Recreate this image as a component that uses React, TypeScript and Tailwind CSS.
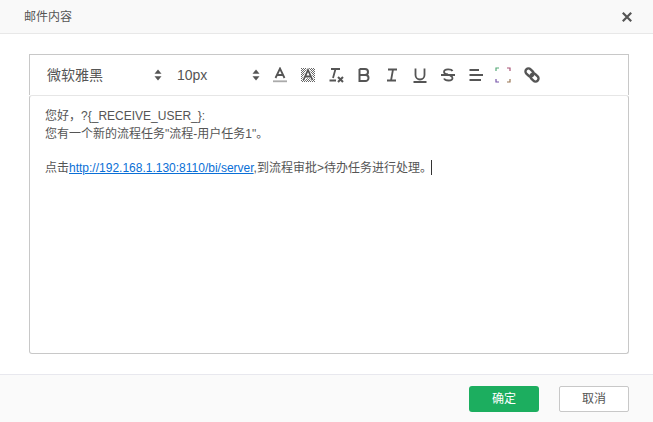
import React from 'react'

const cjk = "font-['Liberation_Sans','Noto_Sans_CJK_SC',sans-serif]"

const Updown = () => (
  <svg width="8" height="12" viewBox="0 0 8 12" className="fill-[#555]">
    <path d="M4 0.5 L7.5 4.8 H0.5 Z" />
    <path d="M4 11.5 L7.5 7.2 H0.5 Z" />
  </svg>
)

const stroke = { fill: 'none', stroke: '#555', strokeWidth: 1.8 }

const Toolbar = () => (
  <div className="flex items-center h-[41px] border border-b-0 border-[#c8c8c8] text-[#555]">
    <div className="w-[115px] ml-[17px] flex items-center justify-between text-[14px]">
      <span>微软雅黑</span>
      <Updown />
    </div>
    <div className="w-[83px] ml-[15px] flex items-center justify-between text-[14px]">
      <span>10px</span>
      <Updown />
    </div>
    <div className="flex items-center gap-3 ml-3">
      <svg width="16" height="16" viewBox="0 0 16 16">
        <path d="M3.5 11 L8 1.5 L12.5 11 M5.2 8 H10.8" {...stroke} />
        <rect x="1" y="13.4" width="14" height="1.8" fill="#aaa" />
      </svg>
      <svg width="16" height="16" viewBox="0 0 16 16">
        <defs>
          <pattern id="hatch" width="2" height="2" patternUnits="userSpaceOnUse">
            <rect width="1" height="1" fill="#666" />
            <rect x="1" y="1" width="1" height="1" fill="#666" />
          </pattern>
        </defs>
        <rect x="1" y="1" width="14" height="14" fill="url(#hatch)" />
        <path d="M3.5 13 L8 3 L12.5 13 M5.2 9.5 H10.8" fill="none" stroke="#fff" strokeWidth="3.4" />
        <path d="M3.5 13 L8 3 L12.5 13 M5.2 9.5 H10.8" {...stroke} />
      </svg>
      <svg width="16" height="16" viewBox="0 0 16 16">
        <path d="M3 2 H12 M7.5 2 L5 11 M1.5 13.5 H8" {...stroke} />
        <path d="M10 10 L15 15 M15 10 L10 15" {...stroke} strokeWidth={2} />
      </svg>
      <svg width="16" height="16" viewBox="0 0 16 16">
        <path d="M3.5 2 H9 A3 3 0 0 1 9 8 H3.5 M3.5 8 H9.5 A3 3 0 0 1 9.5 14 H3.5 Z M3.5 2 V14" {...stroke} strokeWidth={2} />
      </svg>
      <svg width="16" height="16" viewBox="0 0 16 16">
        <path d="M4 2.5 H13 M9 2.5 L7 13.5 M3 13.5 H12" {...stroke} />
      </svg>
      <svg width="16" height="16" viewBox="0 0 16 16">
        <path d="M3.5 1.5 V8 A4.5 4.5 0 0 0 12.5 8 V1.5 M1.5 15 H14.5" {...stroke} />
      </svg>
      <svg width="16" height="16" viewBox="0 0 16 16">
        <path d="M12.5 4 C11.5 2 4 1.5 4 5 C4 7 8 7.5 8 7.5 M4 11.5 C5 14 12.5 14.5 12.5 11 C12.5 9.5 11 9 10 8.5 M1 8 H15" {...stroke} />
      </svg>
      <svg width="16" height="16" viewBox="0 0 16 16">
        <path d="M1.5 3 H11 M1.5 8 H15 M1.5 13 H13" {...stroke} strokeWidth={1.9} />
      </svg>
      <svg width="16" height="16" viewBox="0 0 16 16" className="ml-[-1px]" fill="none" strokeWidth="1.2">
        <path d="M1 4 V1 H4" stroke="#5a7" />
        <path d="M12 1 H15 V4" stroke="#a57" />
        <path d="M1 12 V15 H4" stroke="#75a" />
        <path d="M15 12 V15 H12" stroke="#975" />
      </svg>
      <svg width="16" height="16" viewBox="0 0 16 16" className="ml-[1px]">
        <g transform="rotate(45 8 8)" fill="none" stroke="#555" strokeWidth="2.4">
          <rect x="0" y="5" width="9" height="6" rx="3" />
          <rect x="7" y="5" width="9" height="6" rx="3" />
        </g>
      </svg>
    </div>
  </div>
)

export default function App() {
  return (
    <div className={`w-[653px] h-[422px] flex flex-col bg-white overflow-hidden ${cjk}`}>
      <div className="h-[34px] shrink-0 flex items-center justify-between pl-6 pr-[21px] bg-[#f9f9f9] border-b border-[#e8e8e8]">
        <span className="text-[12px] text-[#555]">邮件内容</span>
        <svg width="10" height="10" viewBox="0 0 10 10">
          <path d="M0.8 0.8 L9.2 9.2 M9.2 0.8 L0.8 9.2" stroke="#555" strokeWidth="2.2" />
        </svg>
      </div>

      <div className="flex-1 pl-[29px] pr-6 pt-5">
        <Toolbar />
        <div className="h-[259px] border border-[#c8c8c8] border-t-[#e6e6e6] rounded-[3px] px-[15px] pt-[11px] text-[12px] leading-[18px] text-[#555]">
          <p>您好，?{'{'}_RECEIVE_USER_{'}'}:</p>
          <p>您有一个新的流程任务"流程-用户任务1"。</p>
          <p className="h-[18px]" />
          <p className="mt-[-2px]">
            点击<a className="text-[#0a6fd6] underline" href="#server">http://192.168.1.130:8110/bi/server</a>,到流程审批&gt;待办任务进行处理。
            <span className="inline-block w-px h-[15px] ml-[-1px] bg-[#333] align-[-3px]" />
          </p>
        </div>
      </div>

      <div className="h-[48px] shrink-0 flex items-center justify-end gap-5 pr-6 bg-[#fafafa] border-t border-[#e8e8ee]">
        <button className="w-[70px] h-[26px] rounded-[3px] bg-[#1cae5f] text-white text-[12px]">确定</button>
        <button className="w-[70px] h-[26px] rounded-[2px] bg-white border border-[#c8c8c8] text-[#555] text-[12px]">取消</button>
      </div>
    </div>
  )
}
